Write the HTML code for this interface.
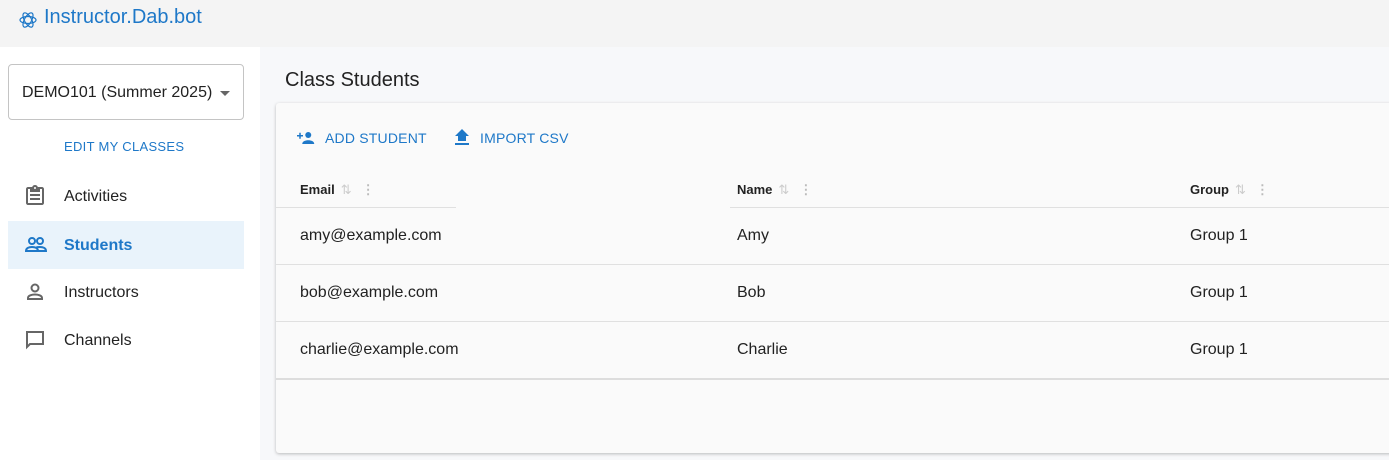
<!DOCTYPE html>
<html><head><style>
*{box-sizing:border-box;margin:0;padding:0}
body{width:1389px;height:460px;overflow:hidden;font-family:"Liberation Sans",Arial,sans-serif;background:#f7f8fa;position:relative;color:#222}
.top{position:absolute;left:0;top:0;width:1389px;height:47px;background:#f4f4f4}
.logo{position:absolute;left:44px;top:6px;font-size:20px;color:#1e78c8}
.side{position:absolute;left:0;top:47px;width:260px;height:413px;background:#fff}
.sel{position:absolute;left:8px;top:64px;width:236px;height:56px;border:1px solid #c4c4c4;border-radius:4px;font-size:16px;padding:19px 0 0 13px;color:#222}
.sel:after{content:"";position:absolute;right:13px;top:26px;border:5px solid transparent;border-top-color:#666}
.edit{position:absolute;left:64px;top:139px;font-size:13px;color:#1e78c8;letter-spacing:.3px}
.nav{position:absolute;left:8px;width:236px;height:48px;font-size:16px}
.nav span{position:absolute;left:56px;top:16px}
.nav svg{position:absolute;left:15px;top:12px}
.act{background:#e9f3fb;color:#1e78c8;font-weight:bold}
.title{position:absolute;left:285px;top:69px;font-size:20px;color:#222}
.card{position:absolute;left:276px;top:103px;width:1120px;height:350px;background:#fafafa;box-shadow:0 1px 3px rgba(0,0,0,.25);border-radius:3px}
.btn{position:absolute;top:130px;font-size:14px;color:#1e78c8;letter-spacing:.2px}
.th{position:absolute;top:182px;font-size:13px;font-weight:bold;color:#222}
.th i{font-style:normal;color:#ccc;font-weight:normal;margin-left:6px}
.th b{color:#bbb;margin-left:10px}
.hl{position:absolute;height:1px;background:#e0e0e0;top:207px}
.td{position:absolute;font-size:16px;color:#222}
.rl{position:absolute;left:276px;width:1113px;height:1px;background:#e0e0e0}
</style></head><body>
<div class="top"></div>
<svg style="position:absolute;left:18px;top:9px" width="20" height="20" viewBox="0 0 20 20" fill="none" stroke="#1e78c8" stroke-width="1.2"><ellipse cx="10" cy="11" rx="8" ry="3.5"/><ellipse cx="10" cy="11" rx="8" ry="3.5" transform="rotate(60 10 11)"/><ellipse cx="10" cy="11" rx="8" ry="3.5" transform="rotate(-60 10 11)"/></svg>
<div class="logo">Instructor.Dab.bot</div>
<div class="side"></div>
<div class="sel">DEMO101 (Summer 2025)</div>
<div class="edit">EDIT MY CLASSES</div>
<div class="nav" style="top:172px"><svg width="24" height="24" viewBox="0 0 24 24" fill="#666"><path d="M19 3h-4.2C14.4 1.8 13.3 1 12 1s-2.4.8-2.8 2H5c-1.1 0-2 .9-2 2v14c0 1.1.9 2 2 2h14c1.1 0 2-.9 2-2V5c0-1.1-.9-2-2-2zm-7 0c.6 0 1 .4 1 1s-.4 1-1 1-1-.4-1-1 .4-1 1-1zm7 16H5V5h2v3h10V5h2v14zM7 10h10v2H7zm0 4h10v2H7z"/></svg><span>Activities</span></div>
<div class="nav act" style="top:221px"><svg width="26" height="24" viewBox="0 0 24 24" fill="none" stroke="#1e78c8" stroke-width="2"><circle cx="8" cy="8" r="3"/><circle cx="16" cy="8" r="3"/><path d="M2 18c0-3 3-4 6-4s6 1 6 4zM12 14.5c1-.4 2.5-.5 4-.5 3 0 6 1 6 4h-8"/></svg><span>Students</span></div>
<div class="nav" style="top:268px"><svg width="24" height="24" viewBox="0 0 24 24" fill="none" stroke="#666" stroke-width="2"><circle cx="12" cy="8" r="3.5"/><path d="M5 19v-1c0-2.5 4-3.5 7-3.5s7 1 7 3.5v1z"/></svg><span>Instructors</span></div>
<div class="nav" style="top:316px"><svg width="24" height="24" viewBox="0 0 24 24" fill="none" stroke="#666" stroke-width="2"><path d="M4 4h16v12H7l-3 3z"/></svg><span>Channels</span></div>
<div class="title">Class Students</div>
<div class="card"></div>
<svg style="position:absolute;left:296px;top:129px" width="20" height="18" viewBox="0 0 24 24" fill="#1e78c8"><circle cx="15" cy="8" r="4"/><path d="M7 20c0-3.5 4-5 8-5s8 1.5 8 5zM3 8V5h2v3h3v2H5v3H3v-3H0V8z"/></svg>
<div class="btn" style="left:325px">ADD STUDENT</div>
<svg style="position:absolute;left:454px;top:129px" width="16" height="18" viewBox="0 0 16 18" fill="#1e78c8"><path d="M4 12h8V7h3L8 0 1 7h3zM1 14h14v2H1z"/></svg>
<div class="btn" style="left:480px">IMPORT CSV</div>
<div class="th" style="left:300px">Email<i>⇅</i><b>⋮</b></div>
<div class="th" style="left:737px">Name<i>⇅</i><b>⋮</b></div>
<div class="th" style="left:1190px">Group<i>⇅</i><b>⋮</b></div>
<div class="hl" style="left:276px;width:180px"></div>
<div class="hl" style="left:730px;width:659px"></div>
<div class="td" style="left:300px;top:227px">amy@example.com</div><div class="td" style="left:737px;top:227px">Amy</div><div class="td" style="left:1190px;top:227px">Group 1</div>
<div class="rl" style="top:264px"></div>
<div class="td" style="left:300px;top:284px">bob@example.com</div><div class="td" style="left:737px;top:284px">Bob</div><div class="td" style="left:1190px;top:284px">Group 1</div>
<div class="rl" style="top:321px"></div>
<div class="td" style="left:300px;top:341px">charlie@example.com</div><div class="td" style="left:737px;top:341px">Charlie</div><div class="td" style="left:1190px;top:341px">Group 1</div>
<div class="rl" style="top:378px;height:2px;background:#ddd"></div>
</body></html>
